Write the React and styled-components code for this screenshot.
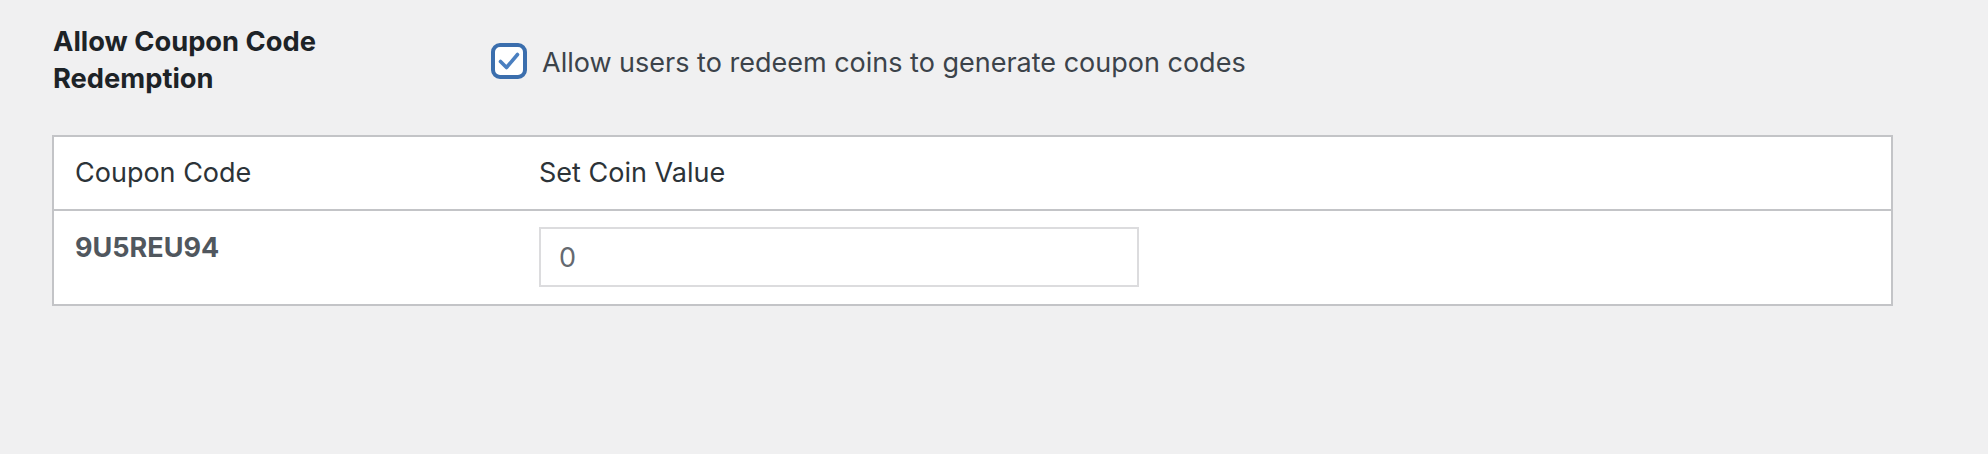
import React from "react"
import styled, { createGlobalStyle } from "styled-components"

const GlobalStyle = createGlobalStyle`
  html, body {
    margin: 0;
    padding: 0;
    background: #f0f0f1;
  }
  body {
    font-family: Inter, "Noto Sans", "Liberation Sans", sans-serif;
    color: #3c434a;
  }
`

const Page = styled.div`
  width: 1988px;
  height: 454px;
  box-sizing: border-box;
  padding: 23px 0 0 52px;
  background: #f0f0f1;
`

const SettingRow = styled.div`
  display: flex;
  align-items: flex-start;
`

const Label = styled.div`
  width: 438px;
  font-size: 27.3px;
  line-height: 37px;
  font-weight: 700;
  color: #1d2327;
  padding-left: 1px;
`

const CheckLabel = styled.label`
  display: flex;
  align-items: center;
  gap: 15px;
  margin-top: 18px;
  font-size: 27px;
  line-height: 36px;
  color: #3c434a;
`

const CheckText = styled.span`
  padding-top: 4px;
`

const Box = styled.span`
  width: 36px;
  height: 36px;
  box-sizing: border-box;
  border: 4px solid #3b6ead;
  border-radius: 9px;
  background: #fff;
  display: flex;
  align-items: center;
  justify-content: center;
`

const Table = styled.div`
  margin-top: 38px;
  width: 1841px;
  box-sizing: border-box;
  border: 2px solid #c3c4c7;
  background: #fff;
`

const Row = styled.div`
  display: grid;
  grid-template-columns: 464px 1fr;
  height: ${p => p.$h}px;
  align-items: ${p => (p.$head ? "center" : "start")};
  border-top: ${p => (p.$head ? "none" : "2px solid #c3c4c7")};
`

const HeadCell = styled.div`
  padding: 0 21px;
  font-size: 27px;
  line-height: 36px;
  color: #2c3338;
`

const CodeCell = styled.div`
  padding: 19px 21px 0;
  font-size: 27px;
  line-height: 36px;
  font-weight: 700;
  color: #50575e;
`

const InputCell = styled.div`
  padding: 16px 21px 0;
`

const CoinInput = styled.input`
  width: 600px;
  height: 60px;
  box-sizing: border-box;
  border: 2px solid #dcdcde;
  border-radius: 0;
  padding: 0 18px;
  font-family: Inter, "Noto Sans", "Liberation Sans", sans-serif;
  font-size: 27px;
  color: #646970;
  background: #fff;
  outline: none;
`

export default function App() {
  return (
    <>
      <GlobalStyle />
      <Page>
        <SettingRow>
          <Label>
            Allow Coupon Code
            <br />
            Redemption
          </Label>
          <CheckLabel>
            <Box>
              <svg width="24" height="24" viewBox="0 0 24 24">
                <path
                  d="M3.5 12.5 L9.5 18.5 L20.5 5.5"
                  fill="none"
                  stroke="#4a7fc0"
                  strokeWidth="3.6"
                  strokeLinecap="round"
                  strokeLinejoin="round"
                />
              </svg>
            </Box>
            <CheckText>Allow users to redeem coins to generate coupon codes</CheckText>
          </CheckLabel>
        </SettingRow>

        <Table>
          <Row $head $h={72}>
            <HeadCell>Coupon Code</HeadCell>
            <HeadCell>Set Coin Value</HeadCell>
          </Row>
          <Row $h={93}>
            <CodeCell>9U5REU94</CodeCell>
            <InputCell>
              <CoinInput type="text" defaultValue="0" />
            </InputCell>
          </Row>
        </Table>
      </Page>
    </>
  )
}
